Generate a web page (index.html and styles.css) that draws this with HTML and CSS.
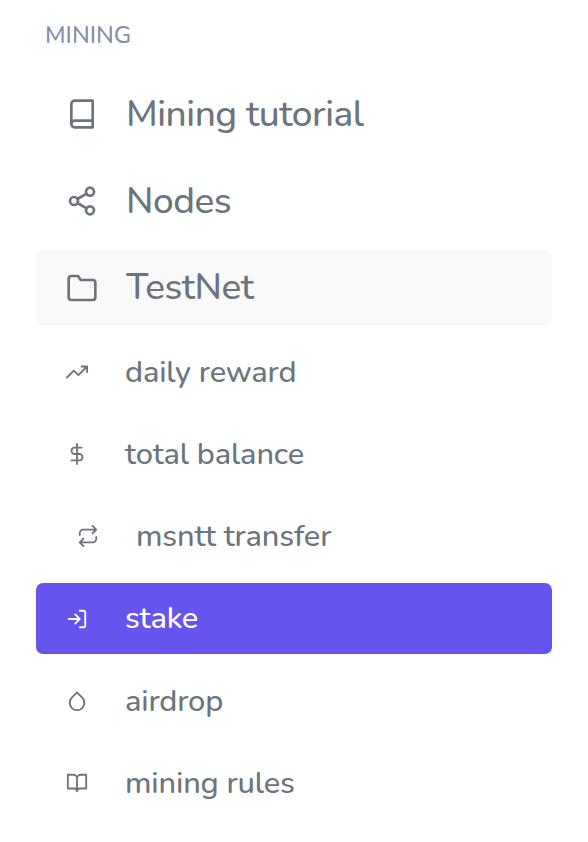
FILE: index.html
```html
<!DOCTYPE html>
<html lang="en">
<head>
<meta charset="utf-8">
<title>Mining</title>
<link rel="stylesheet" href="styles.css">
</head>
<body>
<nav class="sidebar">
<h2 class="heading">MINING</h2>
<a class="item large"><svg class="icon" viewBox="0 0 24 24"><path d="M4 19.500A2.500 2.500 0 0 1 6.500 17H20M6.500 2H20v20H6.500A2.500 2.500 0 0 1 4 19.500v-15A2.500 2.500 0 0 1 6.500 2z"/></svg><span>Mining tutorial</span></a>
<a class="item large"><svg class="icon" viewBox="0 0 24 24"><circle cx="18" cy="5" r="3"/><circle cx="6" cy="12" r="3"/><circle cx="18" cy="19" r="3"/><path d="M8.590 13.510l6.830 3.980M15.410 6.510l-6.820 3.980"/></svg><span>Nodes</span></a>
<a class="item large open"><svg class="icon" viewBox="0 0 24 24"><path d="M22 19a2 2 0 0 1-2 2H4a2 2 0 0 1-2-2V5a2 2 0 0 1 2-2h5l2 3h9a2 2 0 0 1 2 2z"/></svg><span>TestNet</span></a>
<a class="item"><svg class="icon" viewBox="0 0 24 24"><path d="M23 6l-9.500 9.500-5-5L1 18M17 6h6v6"/></svg><span>daily reward</span></a>
<a class="item"><svg class="icon" viewBox="0 0 24 24"><path d="M12 1v22M17 5H9.500a3.500 3.500 0 0 0 0 7h5a3.500 3.500 0 0 1 0 7H6"/></svg><span>total balance</span></a>
<a class="item shifted"><svg class="icon" viewBox="0 0 24 24"><path d="M17 1l4 4-4 4M3 11V9a4 4 0 0 1 4-4h14M7 23l-4-4 4-4M21 13v2a4 4 0 0 1-4 4H3"/></svg><span>msntt transfer</span></a>
<a class="item active"><svg class="icon" viewBox="0 0 24 24"><path d="M15 3h4a2 2 0 0 1 2 2v14a2 2 0 0 1-2 2h-4M10 17l5-5-5-5M15 12H3"/></svg><span>stake</span></a>
<a class="item"><svg class="icon" viewBox="0 0 24 24"><path d="M12 2.690l5.660 5.660a8 8 0 1 1-11.310 0z"/></svg><span>airdrop</span></a>
<a class="item"><svg class="icon" viewBox="0 0 24 24"><path d="M2 3h6a4 4 0 0 1 4 4v14a3 3 0 0 0-3-3H2zM22 3h-6a4 4 0 0 0-4 4v14a3 3 0 0 1 3-3h7z"/></svg><span>mining rules</span></a>
</nav>
</body>
</html>
```
FILE: styles.css
```css
body{margin:0;background:#fff;font-family:Nunito,"Noto Sans",sans-serif;color:#6c757d}
.sidebar{padding:19px 36px 0;display:flex;flex-direction:column}
.heading{margin:0 0 25px;padding-left:9px;height:32px;line-height:32px;color:#858fa5;font-size:24px;font-weight:500}
.item{display:flex;align-items:center;height:71px;margin-bottom:11.25px;border-radius:7px;font-size:30.8px;letter-spacing:-.15px;font-weight:500;line-height:42px;padding-left:30px;gap:37px;box-sizing:border-box;white-space:nowrap}
.icon{width:22px;height:22px;fill:none;stroke:currentColor;stroke-width:2;stroke-linecap:round;stroke-linejoin:round;flex:none}
.large{height:75px;margin-bottom:12px;font-size:37px;letter-spacing:-.45px;gap:28px}
.large .icon{width:32px;height:32px}
.open{background:#f9f9f9;margin-bottom:11.25px}
.open span{padding-bottom:2px}
.shifted{padding-left:41px}
.active{background:#6555ee;color:#fff}
.active span{padding-bottom:1px}
```
